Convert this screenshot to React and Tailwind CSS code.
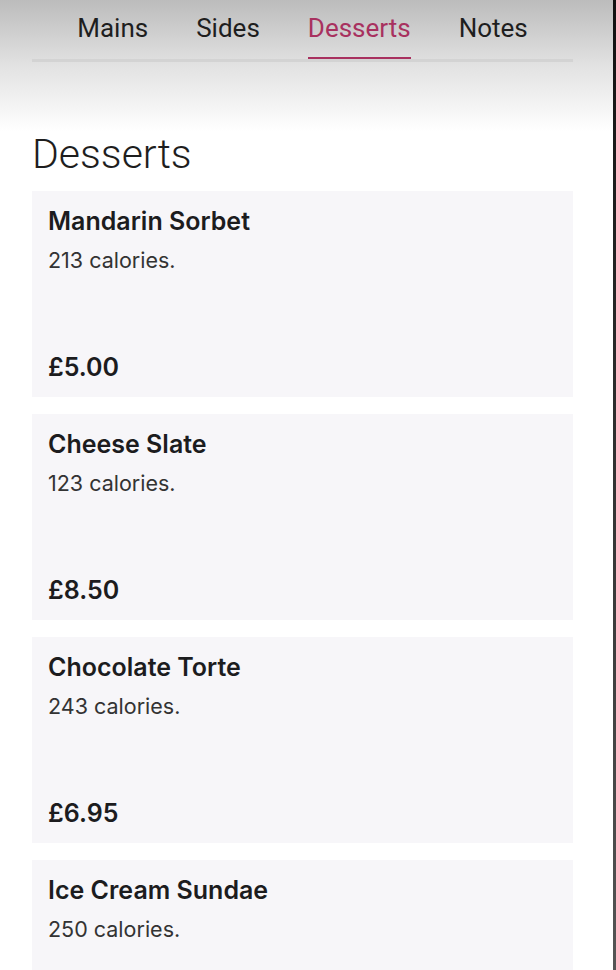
import React from "react";

const items = [
  { name: "Mandarin Sorbet", cal: "213 calories.", price: "£5.00" },
  { name: "Cheese Slate", cal: "123 calories.", price: "£8.50" },
  { name: "Chocolate Torte", cal: "243 calories.", price: "£6.95" },
  { name: "Ice Cream Sundae", cal: "250 calories.", price: "£4.50" },
];

export default function App() {
  return (
    <div className="flex h-[970px] w-[616px] overflow-hidden bg-white">
      <div className="flex min-w-0 flex-1 flex-col">
        <div className="h-[2px] bg-[#7d9694]" />
        <div className="bg-gradient-to-b from-[#bcbcbc] via-[#e2e2e2] to-white pl-8 pr-10 pb-[69px]">
          <div className="flex justify-center gap-12 font-['Roboto',sans-serif] text-[26px] leading-[30px] text-[#1e1e1e]">
            <div className="pt-[13px] pb-[16px]">Mains</div>
            <div className="pt-[13px] pb-[16px]">Sides</div>
            <div className="relative pt-[13px] pb-[16px] text-[#a8315f]">
              Desserts
              <div className="absolute bottom-0 left-0 right-0 h-[2px] bg-[#a8315f]" />
            </div>
            <div className="pt-[13px] pb-[16px]">Notes</div>
          </div>
          <div className="h-[3px] bg-[#d3d3d3]" />
        </div>
        <div className="pl-8 pr-10">
          <h1 className="pb-[14px] font-['Roboto',sans-serif] text-[41px] font-light leading-[46px] text-[#1e1e1e]">
            Desserts
          </h1>
          <div className="flex flex-col gap-[17px]">
            {items.map((it) => (
              <div key={it.name} className="flex h-[206px] flex-col bg-[#f7f6f9] px-4 pt-[16px] pb-[16px] font-['Inter',sans-serif] text-[#1c1c1e]">
                <div className="text-[25px] font-semibold leading-[28px]">{it.name}</div>
                <div className="mt-[12px] text-[21.5px] leading-[26px] text-[#333]">{it.cal}</div>
                <div className="mt-auto text-[25px] font-semibold leading-[28px]">{it.price}</div>
              </div>
            ))}
          </div>
        </div>
      </div>
      <div className="w-[3px] shrink-0 bg-gradient-to-b from-[#111] via-[#333] to-[#555]" />
    </div>
  );
}
